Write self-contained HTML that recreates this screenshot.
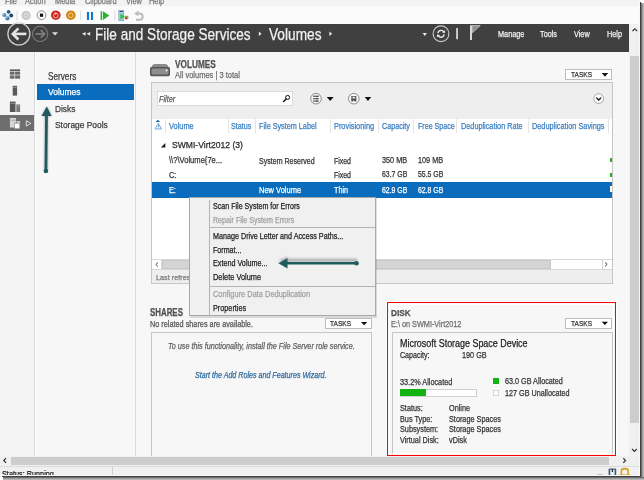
<!DOCTYPE html><html><head><meta charset="utf-8"><style>
html,body{margin:0;padding:0;background:#fff;width:644px;height:480px;overflow:hidden;position:relative}
.a{position:absolute}
.t{font-family:"Liberation Sans",sans-serif;white-space:nowrap;line-height:1;transform-origin:0 0;-webkit-text-stroke:0.25px currentColor}
</style></head><body>
<div class="a" style="left:0px;top:52px;width:34.5px;height:403.5px;background:#f4f4f4;"></div>
<div class="a" style="left:34.3px;top:52px;width:1px;height:403.5px;background:#d8d8d8;"></div>
<div class="a" style="left:35.5px;top:52px;width:99.5px;height:403.5px;background:#f7f7f7;"></div>
<div class="a" style="left:135px;top:52px;width:1px;height:403.5px;background:#dcdcdc;"></div>
<div class="a" style="left:136px;top:52px;width:493px;height:403.5px;background:#f7f7f7;"></div>
<div class="a" style="left:37px;top:84px;width:97px;height:16px;background:#0a6cbc;"></div>
<div class="a t" style="left:47.6px;top:71.62px;font-size:10.25px;transform:scaleX(0.8000);color:#3a3a3a;font-weight:normal;font-style:normal;">Servers</div>
<div class="a t" style="left:47.6px;top:88.39px;font-size:9.35px;transform:scaleX(0.9091);color:#ffffff;font-weight:normal;font-style:normal;">Volumes</div>
<div class="a t" style="left:55.3px;top:104.97px;font-size:9.13px;transform:scaleX(0.9091);color:#3a3a3a;font-weight:normal;font-style:normal;">Disks</div>
<div class="a t" style="left:55.3px;top:120.98px;font-size:9.24px;transform:scaleX(0.9091);color:#3a3a3a;font-weight:normal;font-style:normal;">Storage Pools</div>
<div class="a" style="left:0px;top:115.3px;width:34px;height:15.5px;background:#6e6e6e;"></div>
<svg class="a" style="left:0;top:0" width="644" height="480" viewBox="0 0 644 480">
<g fill="#5a5a5a">
 <rect x="9.9" y="69.4" width="10.2" height="1.6"/>
 <rect x="9.9" y="71.6" width="4.6" height="3.1" fill="#6a6a6a"/><rect x="15.1" y="71.6" width="5" height="3.1" fill="#6a6a6a"/>
 <rect x="9.9" y="75.4" width="4.6" height="3.3" fill="#6a6a6a"/><rect x="15.1" y="75.4" width="5" height="3.3" fill="#6a6a6a"/>
 <rect x="12.7" y="85.8" width="4.4" height="9.8" fill="#5a5a5a"/>
 <rect x="13.2" y="87.3" width="3.4" height="0.6" fill="#b8b8b8"/>
 <rect x="9.9" y="101.6" width="5.6" height="10.4" fill="#555"/>
 <rect x="10.4" y="103.4" width="4.6" height="0.6" fill="#b0b0b0"/>
 <rect x="16.3" y="104.4" width="3.8" height="7.6" fill="#777"/>
 <rect x="16.8" y="105.8" width="2.8" height="0.5" fill="#c0c0c0"/>
</g>
<g>
 <rect x="9.9" y="118" width="6" height="9.5" fill="#d8d8d8"/>
 <rect x="10.4" y="119.8" width="5" height="0.6" fill="#888"/>
 <rect x="16.4" y="121" width="3.7" height="6.5" fill="#c8c8c8"/>
 <path d="M14.5 123.2 h3.6 l1.6 1.6 v3.9 h-5.2z" fill="#fff" stroke="#6e6e6e" stroke-width="0.5"/>
 <path d="M26.3 120.7 L30.9 123.4 L26.3 126.1 Z" fill="none" stroke="#e8e8e8" stroke-width="0.9"/>
</g>
</svg>
<svg class="a" style="left:0;top:0" width="644" height="480" viewBox="0 0 644 480">
<path d="M151.5 67.5 Q152 64.2 155 64 H165 Q168 64.2 168.5 67.5Z" fill="#8a8a8a"/>
<rect x="150" y="67" width="20" height="9.2" rx="1.6" fill="#565656"/>
<rect x="151.5" y="68.6" width="17" height="5.8" rx="0.6" fill="#8e8e8e"/>
<circle cx="166.5" cy="70.4" r="0.9" fill="#fff"/>
</svg>
<div class="a t" style="left:175.2px;top:59.22px;font-size:10.72px;transform:scaleX(0.7692);color:#505050;font-weight:bold;font-style:normal;">VOLUMES</div>
<div class="a t" style="left:175.2px;top:71.18px;font-size:9.00px;transform:scaleX(0.8333);color:#6d6d6d;font-weight:normal;font-style:normal;">All volumes | 3 total</div>
<div class="a" style="left:565.2px;top:68.7px;width:47.3px;height:11.2px;background:#ffffff;border:1px solid #bdbdbd;box-sizing:border-box;"></div>
<div class="a t" style="left:570.9px;top:71.20px;font-size:7.92px;transform:scaleX(0.8333);color:#333;font-weight:normal;font-style:normal;">TASKS</div>
<svg class="a" style="left:0;top:0" width="644" height="480" viewBox="0 0 644 480"><path d="M601.7 73 H608.2 L604.95 76.8Z" fill="#111"/></svg>
<div class="a" style="left:150.5px;top:82px;width:462px;height:201.5px;background:#ffffff;border:1px solid #c6c6c6;box-sizing:border-box;"></div>
<div class="a" style="left:151.5px;top:83px;width:460px;height:35.5px;background:#eeeeee;"></div>
<div class="a" style="left:157px;top:91px;width:135.8px;height:15.3px;background:#ffffff;border:1px solid #dcdcdc;box-sizing:border-box;"></div>
<div class="a t" style="left:159.3px;top:94.68px;font-size:8.76px;transform:scaleX(0.8333);color:#5a5a5a;font-weight:normal;font-style:italic;">Filter</div>
<svg class="a" style="left:0;top:0" width="644" height="480" viewBox="0 0 644 480">
<circle cx="287.6" cy="97.4" r="2" fill="none" stroke="#111" stroke-width="1"/>
<path d="M286.2 98.9 L283.6 101.6" stroke="#111" stroke-width="1.4" stroke-linecap="round"/>
<circle cx="316" cy="98.7" r="5.3" fill="#f6f6f6" stroke="#7a7a7a" stroke-width="0.85"/>
<g fill="#4a4a4a"><rect x="313.2" y="95.6" width="1.5" height="1.4"/><rect x="315.2" y="95.6" width="3.4" height="1.4"/>
<rect x="313.2" y="98" width="1.5" height="1.4"/><rect x="315.2" y="98" width="3.4" height="1.4"/>
<rect x="313.2" y="100.4" width="1.5" height="1.4"/><rect x="315.2" y="100.4" width="3.4" height="1.4"/></g>
<path d="M326.7 97 H333.7 L330.2 100.9Z" fill="#111"/>
<circle cx="353.8" cy="98.7" r="5.3" fill="#f6f6f6" stroke="#7a7a7a" stroke-width="0.85"/>
<path d="M351.3 95.9 h5 v5.7 h-1.3 l-1.2 -1.2 l-1.2 1.2 h-1.3z" fill="#505050"/><rect x="352.5" y="96.7" width="2.6" height="1.8" fill="#e8e8e8"/>
<path d="M364.7 97 H371.2 L367.95 100.9Z" fill="#111"/>
<circle cx="598.7" cy="98.6" r="4.9" fill="#fafafa" stroke="#8a8a8a" stroke-width="0.7"/>
<path d="M596.3 97.6 L598.7 100 L601.1 97.6" fill="none" stroke="#111" stroke-width="1.3"/>
</svg>
<div class="a" style="left:164.8px;top:118.5px;width:0.8px;height:14px;background:#e4e4e4;"></div>
<div class="a" style="left:227.7px;top:118.5px;width:0.8px;height:14px;background:#e4e4e4;"></div>
<div class="a" style="left:254.6px;top:118.5px;width:0.8px;height:14px;background:#e4e4e4;"></div>
<div class="a" style="left:329.6px;top:118.5px;width:0.8px;height:14px;background:#e4e4e4;"></div>
<div class="a" style="left:377.5px;top:118.5px;width:0.8px;height:14px;background:#e4e4e4;"></div>
<div class="a" style="left:413.4px;top:118.5px;width:0.8px;height:14px;background:#e4e4e4;"></div>
<div class="a" style="left:456.3px;top:118.5px;width:0.8px;height:14px;background:#e4e4e4;"></div>
<div class="a" style="left:527.6px;top:118.5px;width:0.8px;height:14px;background:#e4e4e4;"></div>
<div class="a" style="left:607.5px;top:118.5px;width:0.8px;height:14px;background:#e4e4e4;"></div>
<svg class="a" style="left:0;top:0" width="644" height="480" viewBox="0 0 644 480">
<path d="M157.8 119.7 L160.3 121.9 H155.3Z" fill="#1a6cbc"/>
<path d="M158.3 123.2 L161.4 129 H155.1Z" fill="none" stroke="#3a7fc1" stroke-width="0.7"/>
<rect x="158" y="125" width="0.7" height="2" fill="#3a7fc1"/><rect x="158" y="127.6" width="0.7" height="0.7" fill="#3a7fc1"/>
<path d="M160.9 147.6 H165.3 V143Z" fill="#1a1a1a"/>
</svg>
<div class="a t" style="left:168.9px;top:121.58px;font-size:8.88px;transform:scaleX(0.8333);color:#3a7fc1;font-weight:normal;font-style:normal;">Volume</div>
<div class="a t" style="left:231.3px;top:121.79px;font-size:8.64px;transform:scaleX(0.8333);color:#3a7fc1;font-weight:normal;font-style:normal;">Status</div>
<div class="a t" style="left:259px;top:121.74px;font-size:8.70px;transform:scaleX(0.8333);color:#3a7fc1;font-weight:normal;font-style:normal;">File System Label</div>
<div class="a t" style="left:333.9px;top:121.60px;font-size:8.86px;transform:scaleX(0.8333);color:#3a7fc1;font-weight:normal;font-style:normal;">Provisioning</div>
<div class="a t" style="left:381.7px;top:121.79px;font-size:8.64px;transform:scaleX(0.8333);color:#3a7fc1;font-weight:normal;font-style:normal;">Capacity</div>
<div class="a t" style="left:417.5px;top:121.89px;font-size:8.52px;transform:scaleX(0.8333);color:#3a7fc1;font-weight:normal;font-style:normal;">Free Space</div>
<div class="a t" style="left:460.7px;top:121.68px;font-size:8.76px;transform:scaleX(0.8333);color:#3a7fc1;font-weight:normal;font-style:normal;">Deduplication Rate</div>
<div class="a t" style="left:531.7px;top:121.64px;font-size:8.81px;transform:scaleX(0.8333);color:#3a7fc1;font-weight:normal;font-style:normal;">Deduplication Savings</div>
<div class="a t" style="left:171.8px;top:141.36px;font-size:9.03px;transform:scaleX(0.9524);color:#2a2a2a;font-weight:normal;font-style:normal;">SWMI-Virt2012 (3)</div>
<div class="a t" style="left:168.5px;top:155.98px;font-size:9.12px;transform:scaleX(0.8333);color:#333;font-weight:normal;font-style:normal;">\\?\Volume{7e...</div>
<div class="a t" style="left:259px;top:156.53px;font-size:8.47px;transform:scaleX(0.8333);color:#333;font-weight:normal;font-style:normal;">System Reserved</div>
<div class="a t" style="left:334px;top:156.64px;font-size:8.34px;transform:scaleX(0.8333);color:#333;font-weight:normal;font-style:normal;">Fixed</div>
<div class="a t" style="left:381.7px;top:156.28px;font-size:8.76px;transform:scaleX(0.8333);color:#333;font-weight:normal;font-style:normal;">350 MB</div>
<div class="a t" style="left:417.9px;top:156.28px;font-size:8.76px;transform:scaleX(0.8333);color:#333;font-weight:normal;font-style:normal;">109 MB</div>
<div class="a t" style="left:168.5px;top:170.68px;font-size:8.76px;transform:scaleX(0.8333);color:#333;font-weight:normal;font-style:normal;">C:</div>
<div class="a t" style="left:334px;top:171.04px;font-size:8.34px;transform:scaleX(0.8333);color:#333;font-weight:normal;font-style:normal;">Fixed</div>
<div class="a t" style="left:381.7px;top:171.09px;font-size:8.28px;transform:scaleX(0.8333);color:#333;font-weight:normal;font-style:normal;">63.7 GB</div>
<div class="a t" style="left:417.9px;top:171.09px;font-size:8.28px;transform:scaleX(0.8333);color:#333;font-weight:normal;font-style:normal;">55.5 GB</div>
<div class="a" style="left:152px;top:182.4px;width:459.5px;height:15.2px;background:#0a6cbc;"></div>
<div class="a t" style="left:168.5px;top:186.18px;font-size:8.76px;transform:scaleX(0.8333);color:#ffffff;font-weight:normal;font-style:normal;">E:</div>
<div class="a t" style="left:259px;top:185.98px;font-size:9.00px;transform:scaleX(0.8333);color:#ffffff;font-weight:normal;font-style:normal;">New Volume</div>
<div class="a t" style="left:334px;top:186.24px;font-size:8.70px;transform:scaleX(0.8333);color:#ffffff;font-weight:normal;font-style:normal;">Thin</div>
<div class="a t" style="left:381.7px;top:186.59px;font-size:8.28px;transform:scaleX(0.8333);color:#ffffff;font-weight:normal;font-style:normal;">62.9 GB</div>
<div class="a t" style="left:417.9px;top:186.59px;font-size:8.28px;transform:scaleX(0.8333);color:#ffffff;font-weight:normal;font-style:normal;">62.8 GB</div>
<div class="a" style="left:610px;top:157.6px;width:2px;height:4.7px;background:#22b022;"></div>
<div class="a" style="left:610px;top:172.6px;width:2px;height:4.7px;background:#22b022;"></div>
<div class="a" style="left:610px;top:186px;width:2px;height:6px;background:#ffffff;"></div>
<div class="a" style="left:151.5px;top:259.2px;width:460px;height:10.4px;background:#ffffff;border-top:1px solid #d8d8d8;border-bottom:1px solid #d8d8d8;box-sizing:border-box;"></div>
<div class="a" style="left:161.4px;top:259.2px;width:0.8px;height:10.4px;background:#d8d8d8;"></div>
<div class="a" style="left:162px;top:260px;width:388.6px;height:9px;background:#d4d4d4;border:0.6px solid #c8c8c8;box-sizing:border-box;"></div>
<div class="a" style="left:601.5px;top:259.2px;width:0.8px;height:10.4px;background:#d4d4d4;"></div>
<svg class="a" style="left:0;top:0" width="644" height="480" viewBox="0 0 644 480"><path d="M158 262.6 L155.8 264.6 L158 266.6" fill="none" stroke="#444" stroke-width="0.9"/><path d="M605 262.4 L607.2 264.4 L605 266.4" fill="none" stroke="#444" stroke-width="1"/></svg>
<div class="a" style="left:151.5px;top:269.5px;width:460px;height:13px;background:#eeeeee;"></div>
<div class="a t" style="left:156px;top:273.81px;font-size:7.67px;transform:scaleX(0.9524);color:#7a7a7a;font-weight:normal;font-style:normal;">Last refreshed on 1/15/2013 11:39:07 AM</div>
<div class="a t" style="left:149.8px;top:308.41px;font-size:10.27px;transform:scaleX(0.7692);color:#505050;font-weight:bold;font-style:normal;">SHARES</div>
<div class="a t" style="left:149.8px;top:319.78px;font-size:8.76px;transform:scaleX(0.8333);color:#555;font-weight:normal;font-style:normal;">No related shares are available.</div>
<div class="a" style="left:324.6px;top:318.3px;width:47.4px;height:10.5px;background:#ffffff;border:1px solid #bdbdbd;box-sizing:border-box;"></div>
<div class="a t" style="left:330.2px;top:320.40px;font-size:7.92px;transform:scaleX(0.8333);color:#333;font-weight:normal;font-style:normal;">TASKS</div>
<svg class="a" style="left:0;top:0" width="644" height="480" viewBox="0 0 644 480"><path d="M361 321.9 H367.3 L364.15 325.2Z" fill="#111"/></svg>
<div class="a" style="left:150.5px;top:331.5px;width:221.5px;height:130px;background:#f7f7f7;border:1px solid #c6c6c6;box-sizing:border-box;"></div>
<div class="a t" style="left:168px;top:341.96px;font-size:8.68px;transform:scaleX(0.8333);color:#606060;font-weight:normal;font-style:italic;">To use this functionality, install the File Server role service.</div>
<div class="a t" style="left:195px;top:371.46px;font-size:8.56px;transform:scaleX(0.8333);color:#2f6a9c;font-weight:normal;font-style:italic;">Start the Add Roles and Features Wizard.</div>
<div class="a" style="left:391.5px;top:331.5px;width:221.5px;height:130px;background:#f7f7f7;border:1px solid #c6c6c6;box-sizing:border-box;"></div>
<div class="a" style="left:385.9px;top:301px;width:230.7px;height:155.5px;border:1px solid rgba(255,255,255,0.9);box-sizing:border-box;"></div>
<div class="a" style="left:386.9px;top:302px;width:228.7px;height:153.5px;border:1.6px solid #ff0000;box-sizing:border-box;"></div>
<div class="a" style="left:388.5px;top:303.6px;width:225.5px;height:150.3px;border:0.8px solid rgba(255,255,255,0.8);box-sizing:border-box;"></div>
<div class="a t" style="left:391px;top:308.17px;font-size:9.84px;transform:scaleX(0.8333);color:#505050;font-weight:bold;font-style:normal;">DISK</div>
<div class="a t" style="left:391px;top:319.78px;font-size:8.76px;transform:scaleX(0.8333);color:#6d6d6d;font-weight:normal;font-style:normal;">E:\ on SWMI-Virt2012</div>
<div class="a" style="left:565.2px;top:318.1px;width:47px;height:10.5px;background:#ffffff;border:1px solid #bdbdbd;box-sizing:border-box;"></div>
<div class="a t" style="left:570.9px;top:320.30px;font-size:7.92px;transform:scaleX(0.8333);color:#333;font-weight:normal;font-style:normal;">TASKS</div>
<svg class="a" style="left:0;top:0" width="644" height="480" viewBox="0 0 644 480"><path d="M601.7 321.8 H608 L604.85 325.1Z" fill="#111"/></svg>
<div class="a t" style="left:399.7px;top:338.83px;font-size:10.00px;transform:scaleX(0.8929);color:#222;font-weight:normal;font-style:normal;">Microsoft Storage Space Device</div>
<div class="a t" style="left:399.7px;top:351.29px;font-size:8.52px;transform:scaleX(0.8333);color:#333;font-weight:normal;font-style:normal;">Capacity:</div>
<div class="a t" style="left:462.4px;top:351.08px;font-size:8.76px;transform:scaleX(0.8333);color:#333;font-weight:normal;font-style:normal;">190 GB</div>
<div class="a t" style="left:399.7px;top:377.68px;font-size:8.76px;transform:scaleX(0.8333);color:#333;font-weight:normal;font-style:normal;">33.2% Allocated</div>
<div class="a" style="left:399.7px;top:388.5px;width:77.8px;height:8px;background:#ffffff;border:1px solid #d0d0d0;box-sizing:border-box;"></div>
<div class="a" style="left:400.2px;top:389px;width:25.4px;height:7px;background:#13b213;"></div>
<div class="a" style="left:492.9px;top:378.2px;width:5.7px;height:5.8px;background:#13b213;"></div>
<div class="a" style="left:492.9px;top:390.2px;width:5.7px;height:6px;background:#ffffff;border:1px solid #d6d6d6;box-sizing:border-box;"></div>
<div class="a t" style="left:504.8px;top:377.16px;font-size:8.68px;transform:scaleX(0.8333);color:#333;font-weight:normal;font-style:normal;">63.0 GB Allocated</div>
<div class="a t" style="left:504.8px;top:388.77px;font-size:8.66px;transform:scaleX(0.8333);color:#333;font-weight:normal;font-style:normal;">127 GB Unallocated</div>
<div class="a t" style="left:399.7px;top:403.68px;font-size:8.76px;transform:scaleX(0.8333);color:#333;font-weight:normal;font-style:normal;">Status:</div>
<div class="a t" style="left:449.4px;top:403.68px;font-size:8.76px;transform:scaleX(0.8333);color:#333;font-weight:normal;font-style:normal;">Online</div>
<div class="a t" style="left:399.7px;top:414.98px;font-size:8.76px;transform:scaleX(0.8333);color:#333;font-weight:normal;font-style:normal;">Bus Type:</div>
<div class="a t" style="left:449.4px;top:414.98px;font-size:8.76px;transform:scaleX(0.8333);color:#333;font-weight:normal;font-style:normal;">Storage Spaces</div>
<div class="a t" style="left:399.7px;top:425.28px;font-size:8.76px;transform:scaleX(0.8333);color:#333;font-weight:normal;font-style:normal;">Subsystem:</div>
<div class="a t" style="left:449.4px;top:425.28px;font-size:8.76px;transform:scaleX(0.8333);color:#333;font-weight:normal;font-style:normal;">Storage Spaces</div>
<div class="a t" style="left:399.7px;top:435.58px;font-size:8.76px;transform:scaleX(0.8333);color:#333;font-weight:normal;font-style:normal;">Virtual Disk:</div>
<div class="a t" style="left:449.4px;top:435.58px;font-size:8.76px;transform:scaleX(0.8333);color:#333;font-weight:normal;font-style:normal;">vDisk</div>
<div class="a" style="left:190px;top:198px;width:187px;height:120px;background:rgba(0,0,0,0.12);"></div>
<div class="a" style="left:188.6px;top:196.7px;width:187px;height:119.5px;background:#f0f0f0;border:1px solid #a8a8a8;box-sizing:border-box;"></div>
<div class="a" style="left:208.6px;top:199.5px;width:0.9px;height:115.5px;background:#b4b4b4;"></div>
<div class="a" style="left:209.5px;top:227.1px;width:165px;height:0.9px;background:#b4b4b4;"></div>
<div class="a" style="left:209.5px;top:285.6px;width:165px;height:0.9px;background:#b4b4b4;"></div>
<div class="a t" style="left:212.6px;top:201.57px;font-size:8.54px;transform:scaleX(0.8333);color:#222;font-weight:normal;font-style:normal;">Scan File System for Errors</div>
<div class="a t" style="left:212.6px;top:215.59px;font-size:8.52px;transform:scaleX(0.8333);color:#a0a0a0;font-weight:normal;font-style:normal;">Repair File System Errors</div>
<div class="a t" style="left:212.6px;top:232.18px;font-size:8.65px;transform:scaleX(0.8333);color:#222;font-weight:normal;font-style:normal;">Manage Drive Letter and Access Paths...</div>
<div class="a t" style="left:212.6px;top:245.79px;font-size:8.52px;transform:scaleX(0.8333);color:#222;font-weight:normal;font-style:normal;">Format...</div>
<div class="a t" style="left:212.6px;top:259.17px;font-size:8.66px;transform:scaleX(0.8333);color:#222;font-weight:normal;font-style:normal;">Extend Volume...</div>
<div class="a t" style="left:212.6px;top:272.98px;font-size:8.88px;transform:scaleX(0.8333);color:#222;font-weight:normal;font-style:normal;">Delete Volume</div>
<div class="a t" style="left:212.6px;top:289.93px;font-size:8.94px;transform:scaleX(0.8333);color:#a0a0a0;font-weight:normal;font-style:normal;">Configure Data Deduplication</div>
<div class="a t" style="left:212.6px;top:304.10px;font-size:8.74px;transform:scaleX(0.8333);color:#222;font-weight:normal;font-style:normal;">Properties</div>
<div class="a" style="left:0px;top:0px;width:639px;height:5.5px;background:#f3f3f3;"></div>
<div class="a" style="left:0px;top:5.5px;width:639px;height:0.6px;background:#e6e6e6;"></div>
<div class="a" style="left:0px;top:6px;width:639px;height:18px;background:#fbfbfb;"></div>
<div class="a t" style="left:5px;top:-3.12px;font-size:8.88px;transform:scaleX(0.8333);color:#787878;font-weight:normal;font-style:normal;">File</div>
<div class="a t" style="left:24.8px;top:-3.12px;font-size:8.88px;transform:scaleX(0.8333);color:#787878;font-weight:normal;font-style:normal;">Action</div>
<div class="a t" style="left:55px;top:-3.12px;font-size:8.88px;transform:scaleX(0.8333);color:#787878;font-weight:normal;font-style:normal;">Media</div>
<div class="a t" style="left:84.5px;top:-3.12px;font-size:8.88px;transform:scaleX(0.8333);color:#787878;font-weight:normal;font-style:normal;">Clipboard</div>
<div class="a t" style="left:126px;top:-3.12px;font-size:8.88px;transform:scaleX(0.8333);color:#787878;font-weight:normal;font-style:normal;">View</div>
<div class="a t" style="left:148.6px;top:-3.12px;font-size:8.88px;transform:scaleX(0.8333);color:#787878;font-weight:normal;font-style:normal;">Help</div>
<svg class="a" style="left:0;top:0" width="644" height="480" viewBox="0 0 644 480">
<g><circle cx="8.6" cy="11.8" r="1.9" fill="#2a5a80"/><circle cx="4.4" cy="15" r="2.1" fill="#4a8ab8"/><circle cx="11.2" cy="15.4" r="2" fill="#1f4f70"/><circle cx="7.4" cy="18.4" r="2.1" fill="#3a7aa8"/><circle cx="7.8" cy="15" r="1.3" fill="#e8f0f8"/><circle cx="3.8" cy="14.3" r="0.7" fill="#cfe4f4"/><circle cx="6.8" cy="17.7" r="0.7" fill="#cfe4f4"/></g>
<rect x="16.6" y="10.6" width="0.8" height="10" fill="#d4d4d4"/>
<circle cx="26.1" cy="15.4" r="4.6" fill="#c8c8c8"/><circle cx="26.1" cy="15.4" r="2.6" fill="#d8d8d8"/><circle cx="26.1" cy="15.4" r="0.8" fill="#b8b8b8"/>
<circle cx="41.5" cy="15.2" r="4.4" fill="#fff" stroke="#8a8a8a" stroke-width="1"/><rect x="39.9" y="13.6" width="3.2" height="3.2" fill="#111"/>
<circle cx="55.8" cy="15.2" r="4.8" fill="#c8281e"/><circle cx="55.8" cy="15.5" r="2.4" fill="none" stroke="#f4d0cc" stroke-width="0.8"/><rect x="55.4" y="12.4" width="0.8" height="2.8" fill="#f4d0cc"/>
<circle cx="70.8" cy="15.2" r="4.8" fill="#d0860e"/><circle cx="70.8" cy="15.2" r="2.3" fill="none" stroke="#f0d8a8" stroke-width="0.9"/>
<rect x="80.3" y="10.6" width="0.8" height="10" fill="#d4d4d4"/>
<rect x="86.9" y="11.9" width="2.2" height="8.1" fill="#1a78c8"/><rect x="90.9" y="11.9" width="2.2" height="8.1" fill="#1a78c8"/>
<rect x="100.6" y="11.2" width="1.6" height="8.8" fill="#2cb52c"/><path d="M103 11.2 L109.4 15.6 L103 20Z" fill="#2cb52c"/>
<rect x="114.5" y="10.6" width="0.8" height="10" fill="#d4d4d4"/>
<rect x="118.8" y="10.3" width="5" height="10.5" fill="#a8cce8" stroke="#5a8ab8" stroke-width="0.5"/><rect x="119.6" y="11" width="3.4" height="1" fill="#456"/><path d="M120.4 13.4 L124.8 16.6 L120.4 19.8Z" fill="#2cc52c"/><circle cx="126.6" cy="17.6" r="2.1" fill="#b0b0b0"/><circle cx="126.2" cy="18" r="1.2" fill="#c83828"/><circle cx="126.8" cy="16.6" r="0.6" fill="#2a2"/>
<path d="M134.2 13.6 L138.4 10.6 V16.6Z" fill="#bcbcbc"/><path d="M137.5 13.6 H139.6 A3.1 3.1 0 0 1 139.6 19.8 H136" fill="none" stroke="#bcbcbc" stroke-width="2"/>
</svg>
<div class="a" style="left:0px;top:24px;width:629px;height:28px;background:#404040;"></div>
<svg class="a" style="left:0;top:0" width="644" height="480" viewBox="0 0 644 480">
<circle cx="18.9" cy="33.9" r="11" fill="none" stroke="#d0d0d0" stroke-width="1.3"/>
<path d="M13 33.9 H26.4" stroke="#e4e4e4" stroke-width="2.6"/>
<path d="M18.4 28.3 L12.8 33.9 L18.4 39.5" fill="none" stroke="#e4e4e4" stroke-width="2.6"/>
<circle cx="40.1" cy="33.9" r="7.6" fill="none" stroke="#7c7c7c" stroke-width="1.1"/>
<path d="M35.4 33.9 H44.6 M40.8 30.1 L44.6 33.9 L40.8 37.7" fill="none" stroke="#7e7e7e" stroke-width="1.7"/>
<path d="M52 32.3 H58 L55 35.6Z" fill="#dedede"/>
<path d="M85.6 31.9 V35.7 L82 33.8Z M90.2 31.9 V35.7 L86.6 33.8Z" fill="#e8e8e8"/>
<path d="M258.8 31.6 V36 L261.6 33.8Z" fill="#e8e8e8"/>
<path d="M329.4 31.6 V36 L332.2 33.8Z" fill="#e8e8e8"/>
<path d="M422.7 32.9 H426.9 L424.8 35.9Z" fill="#f0f0f0"/>
<circle cx="441" cy="33.7" r="7.9" fill="none" stroke="#c8c8c8" stroke-width="1.15"/>
<path d="M437.8 33.2 A3.3 3.3 0 0 1 443.6 31.6" fill="none" stroke="#e8e8e8" stroke-width="1.4"/><path d="M445.2 30.2 L444.8 33.2 L441.9 32.2Z" fill="#e8e8e8"/>
<path d="M444.2 34.4 A3.3 3.3 0 0 1 438.4 36" fill="none" stroke="#e8e8e8" stroke-width="1.4"/><path d="M436.8 37.3 L437.2 34.3 L440.1 35.3Z" fill="#e8e8e8"/>
<rect x="456.1" y="28" width="1.9" height="11.2" fill="#cfcfcf"/>
<rect x="470" y="25.3" width="2" height="14.7" fill="#d8d8d8"/>
<path d="M472 25.6 H480.3 L472.4 32.7Z" fill="#8e8e8e" stroke="#d8d8d8" stroke-width="0.7"/>
</svg>
<div class="a t" style="left:95px;top:26.40px;font-size:16.18px;transform:scaleX(0.8403);color:#f0f0f0;font-weight:normal;font-style:normal;">File and Storage Services</div>
<div class="a t" style="left:269px;top:26.30px;font-size:16.30px;transform:scaleX(0.8403);color:#f0f0f0;font-weight:normal;font-style:normal;">Volumes</div>
<div class="a t" style="left:497.7px;top:30.08px;font-size:8.76px;transform:scaleX(0.8333);color:#f2f2f2;font-weight:normal;font-style:normal;">Manage</div>
<div class="a t" style="left:540px;top:30.08px;font-size:8.76px;transform:scaleX(0.8333);color:#f2f2f2;font-weight:normal;font-style:normal;">Tools</div>
<div class="a t" style="left:574px;top:30.08px;font-size:8.76px;transform:scaleX(0.8333);color:#f2f2f2;font-weight:normal;font-style:normal;">View</div>
<div class="a t" style="left:607px;top:30.08px;font-size:8.76px;transform:scaleX(0.8333);color:#f2f2f2;font-weight:normal;font-style:normal;">Help</div>
<div class="a" style="left:629px;top:24px;width:10px;height:432px;background:#f0f0f0;"></div>
<div class="a" style="left:630px;top:56px;width:9px;height:366.5px;background:#cdcdcd;"></div>
<svg class="a" style="left:0;top:0" width="644" height="480" viewBox="0 0 644 480"><path d="M632.4 31.2 L634.8 28.8 L637.2 31.2" fill="none" stroke="#333" stroke-width="1.2"/><path d="M632 449 L634.4 451.4 L636.8 449" fill="none" stroke="#333" stroke-width="1.2"/></svg>
<div class="a" style="left:0px;top:455.5px;width:629px;height:10px;background:#f0f0f0;"></div>
<div class="a" style="left:11px;top:456.7px;width:597.5px;height:8px;background:#cdcdcd;"></div>
<div class="a" style="left:629px;top:455.5px;width:10px;height:11px;background:#f0f0f0;"></div>
<svg class="a" style="left:0;top:0" width="644" height="480" viewBox="0 0 644 480"><path d="M6 458.2 L3.8 460.5 L6 462.8" fill="none" stroke="#333" stroke-width="1.2"/><path d="M623.3 458.2 L625.5 460.5 L623.3 462.8" fill="none" stroke="#333" stroke-width="1.2"/></svg>
<div class="a" style="left:0px;top:465.7px;width:639px;height:0.8px;background:#dcdcdc;"></div>
<div class="a" style="left:0px;top:466.5px;width:639px;height:10px;background:#f0f0f0;"></div>
<div class="a t" style="left:2.3px;top:470.08px;font-size:8.76px;transform:scaleX(0.8333);color:#222;font-weight:normal;font-style:normal;">Status: Running</div>
<div class="a" style="left:112px;top:466.5px;width:0.8px;height:10px;background:#d0d0d0;"></div>
<svg class="a" style="left:0;top:0" width="644" height="480" viewBox="0 0 644 480">
<rect x="597" y="474" width="6" height="2" rx="1" fill="#b8c0c8"/><rect x="608.6" y="468.4" width="7.6" height="8" rx="1" fill="#3c5a78"/><rect x="610.2" y="469.6" width="4.4" height="6.8" fill="#e8eef4"/><rect x="611.8" y="469" width="1.2" height="3" fill="#222"/>
<path d="M621.4 476 V471 Q621.4 468.6 624.8 468.6 Q628.2 468.6 628.2 471 V476" fill="none" stroke="#d8a020" stroke-width="1.6"/><rect x="619.5" y="474.4" width="10.6" height="2" fill="#e0a818"/>
</svg>
<div class="a" style="left:639px;top:0px;width:1px;height:476px;background:#f8f8f8;"></div>
<div class="a" style="left:0px;top:475px;width:640px;height:1px;background:#f8f8f8;"></div>
<div class="a" style="left:640px;top:1.5px;width:1.4px;height:476px;background:#3e3e3e;"></div>
<div class="a" style="left:641.4px;top:2.5px;width:2.6px;height:477.5px;background:linear-gradient(90deg,#5a5a5a,#9a9a9a 50%,#c8c8c8);"></div>
<div class="a" style="left:2px;top:476px;width:639.4px;height:1.4px;background:#3e3e3e;"></div>
<div class="a" style="left:3px;top:477.4px;width:641px;height:2.6px;background:linear-gradient(180deg,#5a5a5a,#9a9a9a 50%,#c8c8c8);"></div>
<svg class="a" style="left:0;top:0" width="644" height="480" viewBox="0 0 644 480">
<defs><filter id="sh" x="-50%" y="-50%" width="200%" height="200%"><feGaussianBlur stdDeviation="1"/></filter></defs>
<g opacity="0.35" filter="url(#sh)"><path d="M46.3 116 L45.9 171" stroke="#000" stroke-width="3"/><path d="M46.8 106.5 L51.6 116 H41.5Z"/></g>
<path d="M46.5 115 L45.9 171" stroke="#1e5a5e" stroke-width="2.7"/>
<path d="M46.8 106.5 L51.6 116 H41.5Z" fill="#1e5a5e"/>
<circle cx="45.9" cy="171" r="2.3" fill="#1e5a5e"/>
<g opacity="0.28" filter="url(#sh)"><path d="M284 260.2 L357 260.2" stroke="#000" stroke-width="3"/><path d="M278.3 261 L287.5 256.5 V264Z"/></g>
<path d="M286 263.2 L356.5 263.2" stroke="#1e5a5e" stroke-width="2.4"/>
<path d="M278.3 263.2 L287.5 258.3 V268.4Z" fill="#1e5a5e"/>
<circle cx="356.5" cy="263.2" r="2.3" fill="#1e5a5e"/>
</svg>
</body></html>
